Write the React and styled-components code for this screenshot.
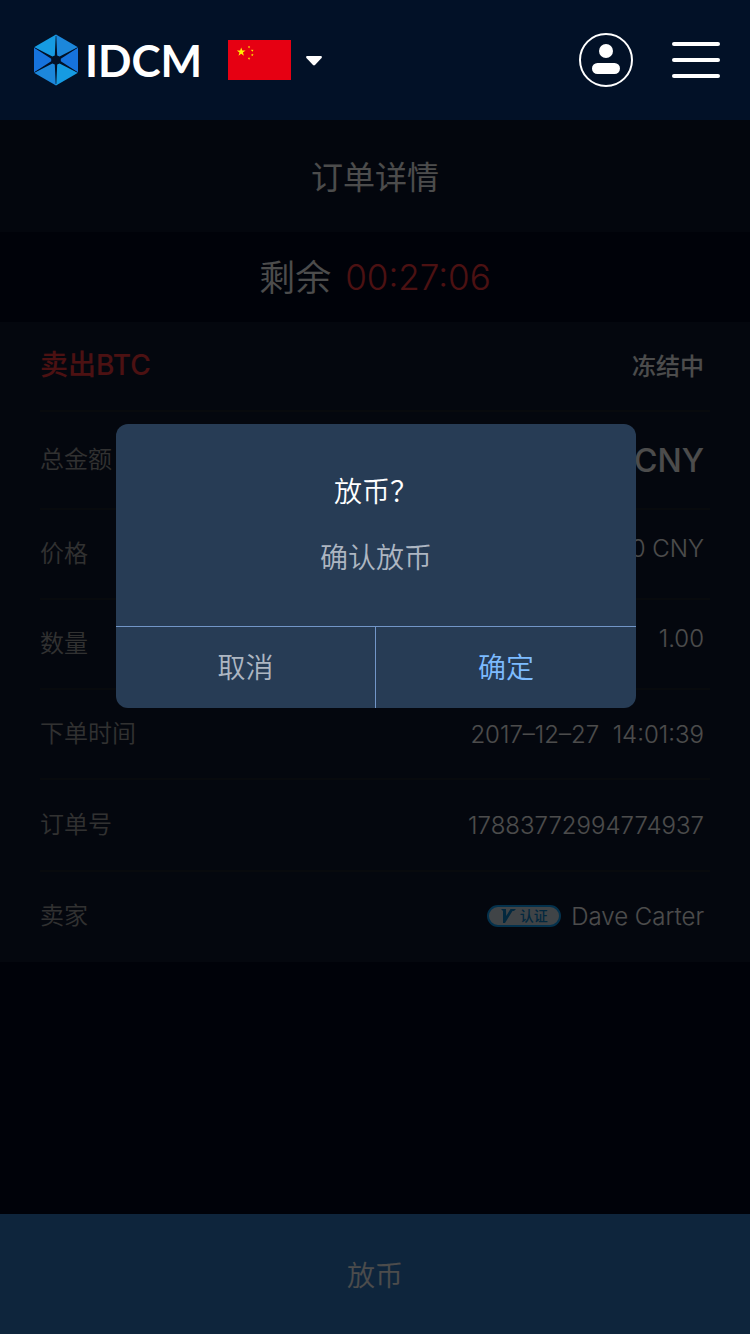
import React from "react";
import styled, { createGlobalStyle } from "styled-components";

const GlobalStyle = createGlobalStyle`
  * { box-sizing: border-box; }
  body {
    margin: 0;
    background: #00071e;
    font-family: Inter, "Noto Sans CJK SC", sans-serif;
    font-weight: 350;
    color: #fff;
  }
  button { font: inherit; border: 0; padding: 0; background: none; cursor: pointer; }
  h1, h2, p, dl, dd, dt { margin: 0; font-weight: inherit; }
`;

const Page = styled.div`
  min-height: 100vh;
  display: flex;
  flex-direction: column;
`;

const Header = styled.header`
  height: 120px;
  padding: 0 30px 0 33px;
  display: flex;
  align-items: center;
  background: #021127;
`;

const Logo = styled.a`
  display: flex;
  align-items: center;
  gap: 6px;
  color: #fff;
  font-family: Lato, Inter, sans-serif;
  font-size: 44px;
  font-weight: 700;
  line-height: 52px;
  text-decoration: none;
`;

const LanguageButton = styled.button`
  display: flex;
  align-items: center;
  gap: 14px;
  margin-left: 26px;
`;

const HeaderActions = styled.div`
  display: flex;
  align-items: center;
  gap: 39px;
  margin-left: auto;
`;

const IconButton = styled.button`
  display: flex;
`;

const Content = styled.div`
  position: relative;
  flex: 1;
  display: flex;
  flex-direction: column;
`;

const TitleBar = styled.h1`
  height: 112px;
  padding-bottom: 2px;
  display: flex;
  align-items: center;
  justify-content: center;
  background: #0b152c;
  font-size: 32px;
  font-weight: 400;
`;

const Countdown = styled.p`
  height: 90px;
  display: flex;
  align-items: center;
  justify-content: center;
  gap: 14px;
  font-size: 36px;
`;

const CountdownLabel = styled.span`
  padding-bottom: 4px;
`;

const Clock = styled.span`
  color: #ff3b3f;
  font-size: 35px;
`;

const Details = styled.dl`
  padding: 0 40px;
  background: #101a31;
`;

const Row = styled.div`
  height: ${(p) => p.$height || 90}px;
  padding-right: 6px;
  display: flex;
  align-items: center;
  justify-content: space-between;
  border-bottom: 2px solid #1c242e;

  &:last-child { border-bottom-color: transparent; }
`;

const Label = styled.dt`
  padding-bottom: 6px;
  color: ${(p) => (p.$accent ? "#ff3b3f" : "#a6a6a6")};
  font-size: ${(p) => (p.$accent ? 28 : 24)}px;
  font-weight: ${(p) => (p.$accent ? 500 : "inherit")};
`;

const Value = styled.dd`
  display: flex;
  align-items: center;
  gap: 10px;
  padding-bottom: ${(p) => p.$raise || 0}px;
  font-size: ${(p) => p.$size || 24}px;
  font-weight: ${(p) => (p.$strong ? 500 : "inherit")};
  white-space: pre;
`;

const Badge = styled.span`
  width: 74px;
  height: 22px;
  display: flex;
  align-items: center;
  justify-content: center;
  gap: 4px;
  border: 2px solid #0fa6ff;
  border-radius: 11px;
  background: #d8e4ee;
  color: #0a86d0;
  font-size: 14px;
  font-weight: 500;
  line-height: 18px;
`;

const ReleaseButton = styled.button`
  height: 120px;
  margin-top: auto;
  background: #307cc8;
  color: #fff;
  font-size: 28px;
`;

const Overlay = styled.div`
  position: absolute;
  inset: 0;
  padding: 304px 14px 0 16px;
  background: rgba(0, 0, 0, 0.7);
`;

const Dialog = styled.section`
  max-width: 520px;
  margin: 0 auto;
  overflow: hidden;
  border-radius: 12px;
  background: #273c55;
  text-align: center;
  font-size: 28px;
  line-height: 40px;
`;

const DialogBody = styled.div`
  padding: 48px 24px;
  display: grid;
  gap: 26px;
`;

const DialogTitle = styled.h2`
  font-size: 28px;
`;

const DialogText = styled.p`
  color: #adb6c2;
`;

const DialogActions = styled.div`
  display: grid;
  grid-template-columns: 1fr 1fr;
  border-top: 1px solid #7296c8;
`;

const DialogButton = styled.button`
  height: 81px;
  color: ${(p) => (p.$primary ? "#7dbbff" : "#adb6c2")};
  font-size: 28px;

  &:first-child { border-right: 1px solid #7296c8; }
`;

const LogoMark = () => (
  <svg width="46" height="52" viewBox="0 0 46 52" aria-hidden="true">
    <path d="M23 .6V26L1 13.2Z" fill="#169be2" />
    <path d="M23 .6V26L45 13.2Z" fill="#1c87db" />
    <path d="M1 13.6 23 26 1 38.4Z" fill="#1673dd" />
    <path d="M45 13.6 23 26 45 38.4Z" fill="#1673dd" />
    <path d="M23 51.4V26L1 38.8Z" fill="#1c87db" />
    <path d="M23 51.4V26L45 38.8Z" fill="#169be2" />
    <path d="M22.7 2H23.3L24.2 21.6 26.6 22.6 44.6 13.2 44.8 13.8 27.8 24.8 27.8 27.2 44.8 38.2 44.6 38.8 26.6 29.4 24.2 30.4 23.3 50H22.7L21.8 30.4 19.4 29.4 1.4 38.8 1.2 38.2 18.2 27.2 18.2 24.8 1.2 13.8 1.4 13.2 19.4 22.6 21.8 21.6Z" fill="#021127" />
  </svg>
);

const STAR = "M0-4 .95-1.25 3.8-1.25 1.5.5 2.35 3.25 0 1.6-2.35 3.25-1.5.5-3.8-1.25-.95-1.25Z";

const Flag = () => (
  <svg width="63" height="40" viewBox="0 0 63 40" aria-hidden="true">
    <rect width="63" height="40" fill="#e60012" />
    <g fill="#fff100">
      <path d={STAR} transform="translate(13.2 12) scale(1.15)" />
      <path d={STAR} transform="translate(21 7) scale(.36) rotate(20)" />
      <path d={STAR} transform="translate(24.3 10.5) scale(.36) rotate(40)" />
      <path d={STAR} transform="translate(24.3 15) scale(.36)" />
      <path d={STAR} transform="translate(21 18.5) scale(.36) rotate(20)" />
    </g>
  </svg>
);

const Caret = () => (
  <svg width="18" height="12" viewBox="0 0 18 12" aria-hidden="true">
    <path d="M2 2H16Q17.8 2.4 16.6 4L10 11Q9 11.8 8 11L1.4 4Q.2 2.4 2 2Z" fill="#fff" />
  </svg>
);

const UserIcon = () => (
  <svg width="54" height="54" viewBox="0 0 54 54" aria-hidden="true">
    <circle cx="27" cy="27" r="26" fill="none" stroke="#fff" strokeWidth="2" />
    <circle cx="27" cy="18" r="7" fill="#fff" />
    <rect x="13" y="30" width="28" height="11" rx="5.5" fill="#fff" />
  </svg>
);

const MenuIcon = () => (
  <svg width="48" height="36" viewBox="0 0 48 36" aria-hidden="true" fill="#fff">
    <rect width="48" height="4" rx="2" />
    <rect y="16" width="48" height="4" rx="2" />
    <rect y="32" width="48" height="4" rx="2" />
  </svg>
);

const VerifiedMark = () => (
  <svg width="15" height="14" viewBox="0 0 15 14" aria-hidden="true">
    <path d="M0 0H5L5.2 7 9.5 0H15L13 2 11.5 2 4 14H2L2 2Z" fill="#0a86d0" />
  </svg>
);

export default function App() {
  return (
    <>
      <GlobalStyle />
      <Page>
        <Header>
          <Logo href="#home">
            <LogoMark />
            IDCM
          </Logo>
          <LanguageButton aria-label="中文">
            <Flag />
            <Caret />
          </LanguageButton>
          <HeaderActions>
            <IconButton aria-label="账户"><UserIcon /></IconButton>
            <IconButton aria-label="菜单"><MenuIcon /></IconButton>
          </HeaderActions>
        </Header>
        <Content>
          <TitleBar>订单详情</TitleBar>
          <Countdown>
            <CountdownLabel>剩余</CountdownLabel>
            <Clock>00:27:06</Clock>
          </Countdown>
          <Details>
            <Row>
              <Label $accent>卖出BTC</Label>
              <Value $strong $raise={4}>冻结中</Value>
            </Row>
            <Row $height={98}>
              <Label>总金额</Label>
              <Value $strong $size={32}>CNY</Value>
            </Row>
            <Row>
              <Label>价格</Label>
              <Value $raise={12}>0 CNY</Value>
            </Row>
            <Row>
              <Label>数量</Label>
              <Value $raise={12}>1.00</Value>
            </Row>
            <Row>
              <Label>下单时间</Label>
              <Value>{"2017–12–27  14:01:39"}</Value>
            </Row>
            <Row $height={92}>
              <Label>订单号</Label>
              <Value>17883772994774937</Value>
            </Row>
            <Row>
              <Label>卖家</Label>
              <Value>
                <Badge><VerifiedMark />认证</Badge>
                Dave Carter
              </Value>
            </Row>
          </Details>
          <ReleaseButton>放币</ReleaseButton>
          <Overlay>
            <Dialog role="dialog" aria-modal="true" aria-labelledby="dialog-title">
              <DialogBody>
                <DialogTitle id="dialog-title">放币？</DialogTitle>
                <DialogText>确认放币</DialogText>
              </DialogBody>
              <DialogActions>
                <DialogButton>取消</DialogButton>
                <DialogButton $primary>确定</DialogButton>
              </DialogActions>
            </Dialog>
          </Overlay>
        </Content>
      </Page>
    </>
  );
}
